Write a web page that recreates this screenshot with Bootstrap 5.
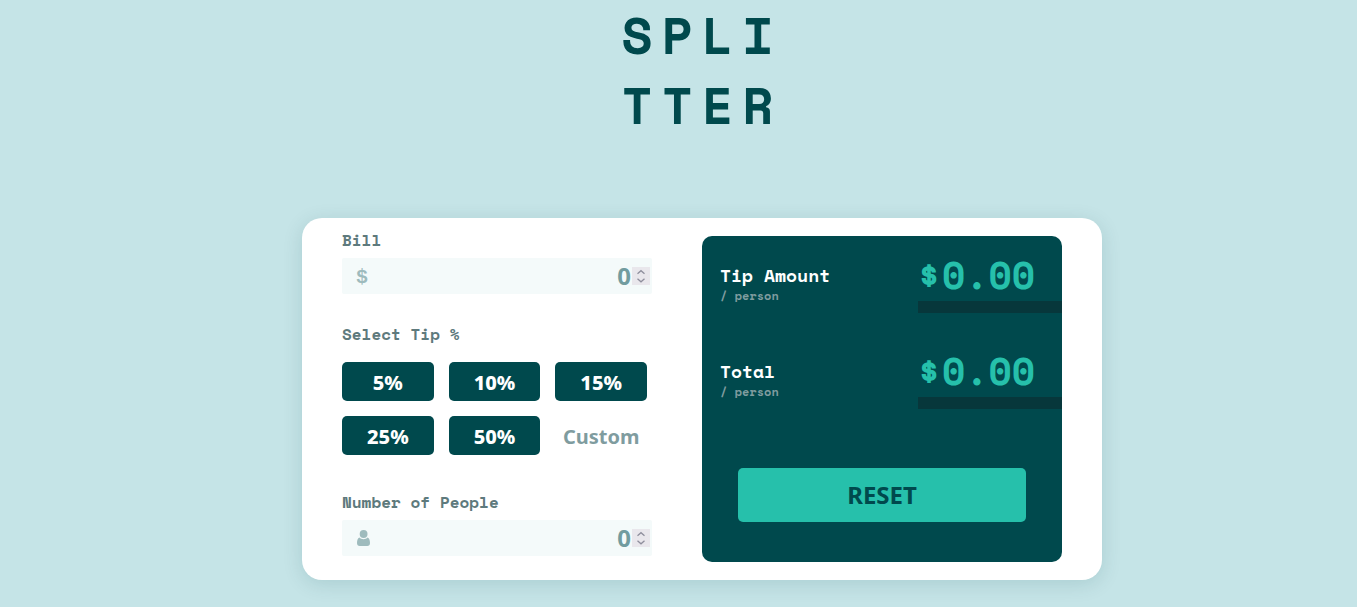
<!DOCTYPE html>
<html lang="en">
<head>
<meta charset="utf-8">
<meta name="viewport" content="width=device-width, initial-scale=1">
<title>Splitter</title>
<link href="https://cdn.jsdelivr.net/npm/bootstrap@5.3.0/dist/css/bootstrap.min.css" rel="stylesheet">
<style>
  :root { --ink: #00494d; --mint: #26c0ab; --pale: #f4fafa; --mono: "Space Mono", "Liberation Mono", monospace; }
  body { background: #c5e4e7; font-family: "Noto Sans", sans-serif; }
  .page { padding: 0 0 24px; }
  .brand { font: 700 51px/70px var(--mono); letter-spacing: 9px; color: var(--ink); margin-bottom: 78px; }
  .calculator { max-width: 800px; border-radius: 20px; padding: 10px 40px 18px; box-shadow: 0 4px 20px rgba(0, 73, 77, .14); column-gap: 50px; }
  .field-label { font: 700 16px/24px var(--mono); color: #5e7a7d; margin: 0; }
  .entry { display: flex; align-items: center; height: 36px; margin-top: 6px; padding: 0 2px 0 14px; background: var(--pale); border-radius: 2px; }
  .entry .sign { width: 16px; color: #9ebbbd; }
  .entry .currency { padding-top: 4px; font: 700 20px/32px "Liberation Mono", monospace; }
  .entry input { flex: 1; min-width: 0; border: 0; padding: 0; background: none; text-align: right; font-weight: 700; font-size: 24px; line-height: 36px; color: #729c9f; outline-offset: 2px; }
  .entry input::-webkit-inner-spin-button {
    -webkit-appearance: none; opacity: 1; width: 18px; height: 18px; margin: 0 0 0 1px; align-self: center;
    background: #e9e7ec url("data:image/svg+xml,%3Csvg xmlns='http://www.w3.org/2000/svg' viewBox='0 0 18 18' fill='none' stroke='%238f8f9d' stroke-width='1.3'%3E%3Cpath d='M5.5 6.7 9 3.7l3.5 3M5.5 11.8l3.5 3 3.500-3'/%3E%3C/svg%3E");
  }
  .tip-group { margin-top: 28px; }
  .tip-group legend { float: none; }
  .tips { display: grid; grid-template-columns: repeat(3, 1fr); gap: 15px; margin: 16px 5px 35px 0; }
  .tip { height: 39px; min-width: 0; border: 0; padding: 2px 0 0; border-radius: 5px; background: var(--ink); color: #fff; font-weight: 800; font-size: 20px; line-height: 37px; text-align: center; }
  .tip-custom { background: none; color: #7f9c9f; font-weight: 700; }
  .tip-custom::placeholder { color: #7f9c9f; opacity: 1; }
  .inputs { flex: 310 1 0; min-width: 260px; }
  .results { flex: 360 1 0; min-width: 300px; margin-top: 8px; padding: 17px 0 40px; background: var(--ink); border-radius: 10px; }
  .result { display: grid; grid-template-columns: 3fr 2fr; margin-bottom: 36px; }
  .result-name { padding: 9px 0 0 18px; font: 700 18px/26px var(--mono); color: #fff; }
  .result-name small { display: block; font-size: 12px; line-height: 16px; color: #7f9c9f; }
  .amount { display: flex; gap: 2px; height: 60px; font: 700 38px/44px var(--mono); color: var(--mint); white-space: nowrap; border-bottom: 12px solid #07373b; }
  .amount span { font-size: 36px; }
  .reset { display: block; width: 80%; height: 54px; margin: 59px auto 0; border: 0; border-radius: 5px; background: var(--mint); color: var(--ink); font-weight: 700; font-size: 24px; }
  @media (min-width: 900px) { .page { padding-left: 47px; } }
</style>
</head>
<body>
<main class="page d-flex flex-column align-items-center">
  <h1 class="brand">SPLI<br>TTER</h1>
  <form class="calculator w-100 bg-white d-flex flex-wrap">
    <section class="inputs">
      <label class="field-label d-block" for="bill">Bill</label>
      <div class="entry">
        <span class="sign currency" aria-hidden="true">$</span>
        <input id="bill" type="number" min="0" value="0">
      </div>
      <fieldset class="tip-group">
        <legend class="field-label">Select Tip %</legend>
        <div class="tips">
          <button class="tip" type="button">5%</button>
          <button class="tip" type="button">10%</button>
          <button class="tip" type="button">15%</button>
          <button class="tip" type="button">25%</button>
          <button class="tip" type="button">50%</button>
          <input class="tip tip-custom" type="text" inputmode="numeric" placeholder="Custom" aria-label="Custom tip">
        </div>
      </fieldset>
      <label class="field-label d-block" for="people">Number of People</label>
      <div class="entry">
        <span class="sign d-flex" aria-hidden="true"><svg width="15" height="16" viewBox="0 0 15 16" fill="currentColor"><circle cx="7.6" cy="4" r="3.9"/><path d="M3.4 7.6C1.7 8.4 1 10.6 1 13.100c0 1.900 1 2.900 2.700 2.900h7.600c1.700 0 2.700-1 2.700-2.900 0-2.500-.7-4.700-2.400-5.500-1 1-2.500 1.600-4.100 1.600S4.400 8.600 3.400 7.600z"/></svg></span>
        <input id="people" type="number" min="0" value="0">
      </div>
    </section>
    <section class="results">
      <div class="result">
        <div class="result-name">Tip Amount<small>/ person</small></div>
        <output class="amount"><span>$</span>0.00</output>
      </div>
      <div class="result mb-0">
        <div class="result-name">Total<small>/ person</small></div>
        <output class="amount"><span>$</span>0.00</output>
      </div>
      <button class="reset" type="reset">RESET</button>
    </section>
  </form>
</main>
<script src="https://cdn.jsdelivr.net/npm/bootstrap@5.3.0/dist/js/bootstrap.bundle.min.js"></script>
</body>
</html>
